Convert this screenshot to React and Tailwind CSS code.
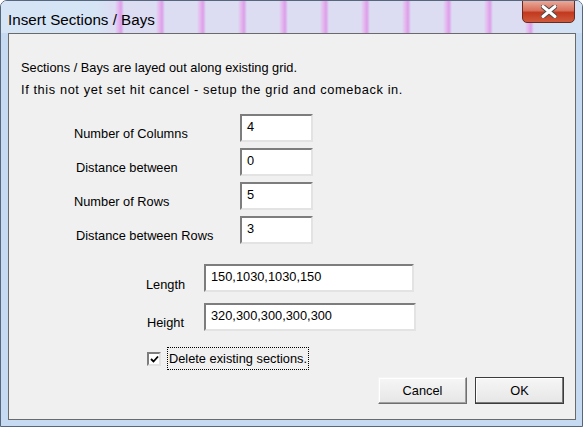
import React from "react";

const font = { fontFamily: '"Liberation Sans", Arial, sans-serif' };

function Box({ value, className = "" }) {
  return (
    <div
      className={`h-[28px] bg-white border-2 border-t-[#7d7d7d] border-l-[#7d7d7d] border-b-[#e3e3e3] border-r-[#e3e3e3] pl-[5px] pt-[3px] text-[12.8px] leading-[15px] text-black ${className}`}
    >
      {value}
    </div>
  );
}

function Row({ label, value, pad }) {
  return (
    <div className="flex">
      <div className={`w-[231px] pt-[12px] text-[12.8px] leading-[15px] ${pad}`}>{label}</div>
      <Box value={value} className="w-[73px]" />
    </div>
  );
}

export default function App() {
  return (
    <div
      style={font}
      className="w-[583px] h-[427px] rounded-t-[7px] border border-[#56677d] bg-[#c6dbf2] overflow-hidden"
    >
      {/* caption */}
      <div className="h-[32px] flex justify-between bg-[linear-gradient(90deg,#d6e5f6_0,#d6e5f6_95px,transparent_110px,transparent_530px,#d2e2f4_545px),repeating-linear-gradient(90deg,#dcdcf3_0,#dcdcf3_32px,#e6b9ef_35px,#dc9fe9_38px,#dcdcf3_41px)]">
        <div className="pl-[7px] pt-[10px] text-[15.2px] leading-[18px] text-black">
          Insert Sections / Bays
        </div>
        <div className="mr-[7px] -mt-px w-[53px] h-[23px] rounded-b-[5px] border border-[#6b2a1e] bg-[linear-gradient(180deg,#eaa898_0%,#d8705b_45%,#c2391f_55%,#cf5a3c_100%)] flex items-center justify-center">
          <svg width="16" height="13" viewBox="0 0 16 13">
            <path
              d="M2 1.5 L14 11.5 M14 1.5 L2 11.5"
              stroke="#4a4a4a"
              strokeWidth="5"
              strokeLinecap="round"
            />
            <path
              d="M2 1.5 L14 11.5 M14 1.5 L2 11.5"
              stroke="#ffffff"
              strokeWidth="3"
              strokeLinecap="round"
            />
          </svg>
        </div>
      </div>

      {/* client area */}
      <div className="ml-[7px] w-[568px] h-[387px] border border-[#6a6a6a] bg-[#f0f0f0] text-black">
        <div className="pl-[12px] pt-[23px] text-[12.8px] leading-[22px]">
          <div>Sections / Bays are layed out along existing grid.</div>
          <div className="tracking-[0.6px]">If this not yet set hit cancel - setup the grid and comeback in.</div>
        </div>

        <div className="mt-[13px] flex flex-col gap-[6px]">
          <Row label="Number of Columns" value="4" pad="pl-[65px]" />
          <Row label="Distance between" value="0" pad="pl-[67px]" />
          <Row label="Number of Rows" value="5" pad="pl-[65px]" />
          <Row label="Distance between Rows" value="3" pad="pl-[67px]" />
        </div>

        <div className="mt-[20px] flex">
          <div className="w-[195px] pl-[137px] pt-[13px] text-[12.8px] leading-[15px]">Length</div>
          <Box value="150,1030,1030,150" className="w-[210px] h-[27px]" />
        </div>
        <div className="mt-[11px] flex">
          <div className="w-[195px] pl-[138px] pt-[12px] text-[12.8px] leading-[15px]">Height</div>
          <Box value="320,300,300,300,300" className="w-[212px] h-[27px]" />
        </div>

        <div className="mt-[16px] pl-[138px] flex items-center">
          <div className="w-[14px] h-[14px] bg-white border-2 border-t-[#7d7d7d] border-l-[#7d7d7d] border-b-[#e3e3e3] border-r-[#e3e3e3] flex items-center justify-center">
            <svg width="9" height="8" viewBox="0 0 9 8">
              <path d="M1 4 L3.5 6.5 L8 1.5" fill="none" stroke="#000" strokeWidth="1.8" />
            </svg>
          </div>
          <div className="ml-[6px] px-[1px] h-[23px] border border-dotted border-black text-[12.8px] leading-[21px]">
            Delete existing sections.
          </div>
        </div>

        <div className="mt-[7px] pr-[11px] flex justify-end gap-[8px]">
          <button className="w-[89px] h-[27px] border border-t-[#f4f4f4] border-l-[#f4f4f4] border-b-[#6f6f6f] border-r-[#6f6f6f] bg-[linear-gradient(180deg,#f6f6f6,#e6e6e6)] text-[12.8px] shadow-[inset_-1px_-1px_0_#a0a0a0,inset_1px_1px_0_#ffffff]">
            Cancel
          </button>
          <button className="w-[89px] h-[27px] border border-[#3c3c3c] bg-[linear-gradient(180deg,#f6f6f6,#e6e6e6)] text-[12.8px] shadow-[inset_-1px_-1px_0_#7a7a7a,inset_1px_1px_0_#ffffff]">
            OK
          </button>
        </div>
      </div>
    </div>
  );
}
